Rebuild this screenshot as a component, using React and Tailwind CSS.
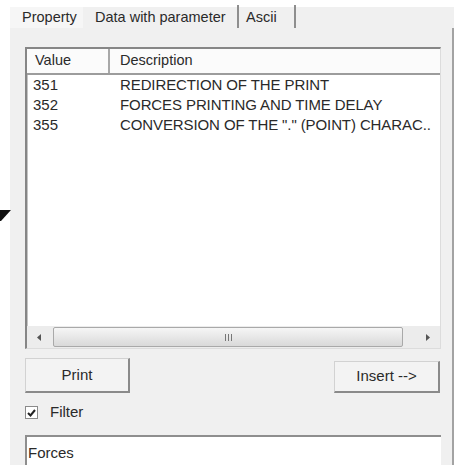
import { useState } from 'react';

// Entries shown in the "Data with parameter" list
const ROWS = [
  { value: '351', desc: 'REDIRECTION OF THE PRINT' },
  { value: '352', desc: 'FORCES PRINTING AND TIME DELAY' },
  { value: '355', desc: 'CONVERSION OF THE "." (POINT) CHARAC..' },
];

const TABS = ['Property', 'Data with parameter', 'Ascii'];

function ScrollArrow({ dir }) {
  return (
    <svg width="5" height="7" viewBox="0 0 5 7" aria-hidden="true">
      {dir === 'left'
        ? <polygon points="4,0 4,7 0,3.5" fill="#555" />
        : <polygon points="0,0 0,7 4,3.5" fill="#555" />}
    </svg>
  );
}

export default function App() {
  const [filter, setFilter] = useState(true);
  const [query, setQuery] = useState('Forces');

  return (
    <div
      className="relative w-[456px] h-[465px] overflow-hidden bg-white pl-[10px] pt-[7px] text-[#2a2a2a]"
      style={{ fontFamily: '"Liberation Sans", Arial, sans-serif' }}
    >
      {/* arrow tip sticking in from the left */}
      <svg className="absolute left-0 top-[209px]" width="11" height="13" viewBox="0 0 11 13" aria-hidden="true">
        <polygon points="0,1 11,1 1,12 0,12" fill="#111" />
      </svg>

      <div className="flex h-[458px] w-[444px] flex-col bg-[#f0f0f0]">
        {/* Tabs */}
        <div className="flex h-[26px] text-[14.5px] leading-none">
          <div className="flex w-[73px] items-center bg-[#f6f6f6] pl-[12px]">{TABS[0]}</div>
          <div className="flex w-[154px] items-center pl-[12px]">{TABS[1]}</div>
          <div className="-mt-[2px] flex w-[59px] items-center border-x-2 border-[#8e8e8e] pl-[7px] pt-[2px]">{TABS[2]}</div>
          <div className="flex-1" />
        </div>

        <div className="flex flex-1 border-r-2 border-[#a3a3a3] pl-[15px] pr-[11px]">
          <div className="flex flex-1 flex-col">
            {/* List view */}
            <div className="mt-[19px] flex h-[302px] flex-col border-l-2 border-t-2 border-[#868686] border-r border-b border-r-[#dcdcdc] border-b-[#dcdcdc] bg-white shadow-[inset_1px_1px_0_#c4c4c4]">
              <div className="flex h-[26px] border-b-2 border-[#9c9c9c] bg-[#fbfbfb] text-[14.5px]">
                <div className="flex w-[83px] items-center border-r-2 border-[#a8a8a8] pl-[8px]">Value</div>
                <div className="flex flex-1 items-center pl-[10px]">Description</div>
              </div>
              <div className="flex-1 text-[15px]">
                {ROWS.map((r) => (
                  <div key={r.value} className="flex h-[20px] items-center whitespace-nowrap">
                    <div className="w-[85px] pl-[6px]">{r.value}</div>
                    <div className="pl-[8px] tracking-[-0.1px]">{r.desc}</div>
                  </div>
                ))}
              </div>
              {/* Horizontal scrollbar */}
              <div className="flex h-[22px] items-center bg-[#ececec]">
                <div className="flex h-full w-[24px] items-center justify-center">
                  <ScrollArrow dir="left" />
                </div>
                <div className="ml-[2px] flex h-[20px] w-[350px] items-center justify-center rounded-[2px] border border-[#a9a9a9] bg-gradient-to-b from-[#f6f6f6] to-[#d9d9d9]">
                  <div className="flex gap-[2px]">
                    <span className="h-[7px] w-px bg-[#777]" />
                    <span className="h-[7px] w-px bg-[#777]" />
                    <span className="h-[7px] w-px bg-[#777]" />
                  </div>
                </div>
                <div className="flex-1" />
                <div className="flex h-full w-[24px] items-center justify-center">
                  <ScrollArrow dir="right" />
                </div>
              </div>
            </div>

            {/* Buttons */}
            <div className="mt-[9px] flex items-start justify-between pr-[1px] text-[15px]">
              <button className="h-[35px] w-[105px] border-l border-t border-[#d2d2d2] border-r-2 border-b-2 border-r-[#8a8a8a] border-b-[#8a8a8a] bg-[#f3f3f3]">
                Print
              </button>
              <button className="mt-[3px] h-[32px] w-[106px] border-l border-t border-[#d2d2d2] border-r-2 border-b-2 border-r-[#8a8a8a] border-b-[#8a8a8a] bg-[#f3f3f3]">
                Insert --&gt;
              </button>
            </div>

            {/* Filter checkbox */}
            <label className="mt-[13px] flex h-[13px] items-center gap-[12px] text-[15px]">
              <span
                className="flex h-[13px] w-[13px] items-center justify-center border border-[#8a8a8a] bg-white"
                onClick={() => setFilter(!filter)}
              >
                {filter && (
                  <svg width="9" height="8" viewBox="0 0 9 8" aria-hidden="true">
                    <polyline points="1,4 3.5,6.5 8,1" fill="none" stroke="#222" strokeWidth="2" />
                  </svg>
                )}
              </span>
              <span>Filter</span>
            </label>

            {/* Filter text */}
            <div className="mt-[16px] flex-1 border-l-2 border-t-2 border-[#8e8e8e] bg-white pl-[1px] pt-[4px] pr-[1px]">
              <input
                value={query}
                onChange={(e) => setQuery(e.target.value)}
                className="w-full bg-transparent text-[15px] leading-[17px] outline-none"
              />
            </div>
          </div>
        </div>
      </div>
    </div>
  );
}
